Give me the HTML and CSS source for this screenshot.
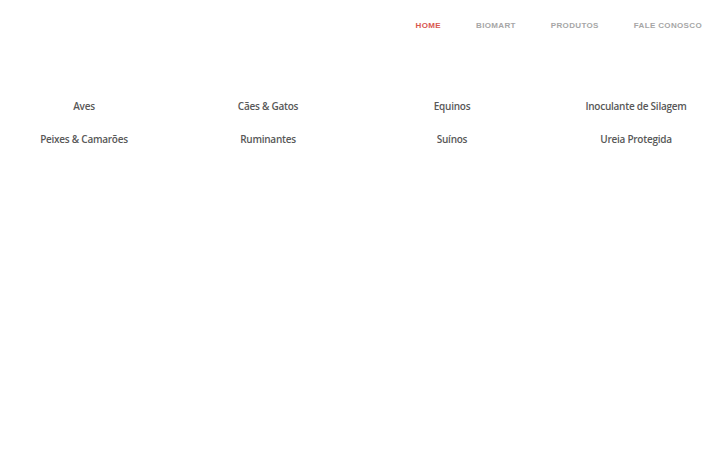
FILE: index.html
```html
<!DOCTYPE html>
<html lang="pt">
<head>
<meta charset="utf-8">
<title>Biomart</title>
<link rel="stylesheet" href="styles.css">
</head>
<body>
<header class="header">
  <nav class="nav">
    <a class="nav-link active" href="#">Home</a>
    <a class="nav-link" href="#">Biomart</a>
    <a class="nav-link" href="#">Produtos</a>
    <a class="nav-link" href="#">Fale Conosco</a>
  </nav>
</header>
<main class="categories">
  <a class="cat" href="#">Aves</a>
  <a class="cat" href="#">Cães &amp; Gatos</a>
  <a class="cat" href="#">Equinos</a>
  <a class="cat" href="#">Inoculante de Silagem</a>
  <a class="cat" href="#">Peixes &amp; Camarões</a>
  <a class="cat" href="#">Ruminantes</a>
  <a class="cat" href="#">Suínos</a>
  <a class="cat" href="#">Ureia Protegida</a>
</main>
</body>
</html>
```
FILE: styles.css
```css
* { box-sizing: border-box; }
html, body { margin: 0; padding: 0; background: #fff; }
body { font-family: "Open Sans", "Liberation Sans", sans-serif; overflow: hidden; }
.header { display: flex; justify-content: flex-end; padding: 19px 18px 0 0; height: 50px; }
.nav { display: flex; gap: 35px; }
.nav-link {
  font-family: "Liberation Sans", Arial, sans-serif;
  font-size: 8px;
  font-weight: 700;
  letter-spacing: 0.35px;
  text-transform: uppercase;
  color: #a6a6a6;
  text-decoration: none;
  line-height: 13px;
}
.nav-link.active { color: #d9574f; }
.categories {
  display: grid;
  grid-template-columns: repeat(4, 184px);
  margin: 48px 0 0 -8px;
  row-gap: 17px;
}
.cat {
  text-align: center;
  font-size: 10px;
  font-weight: 600;
  color: #585858;
  text-decoration: none;
  line-height: 16px;
  letter-spacing: -0.25px;
}
```
